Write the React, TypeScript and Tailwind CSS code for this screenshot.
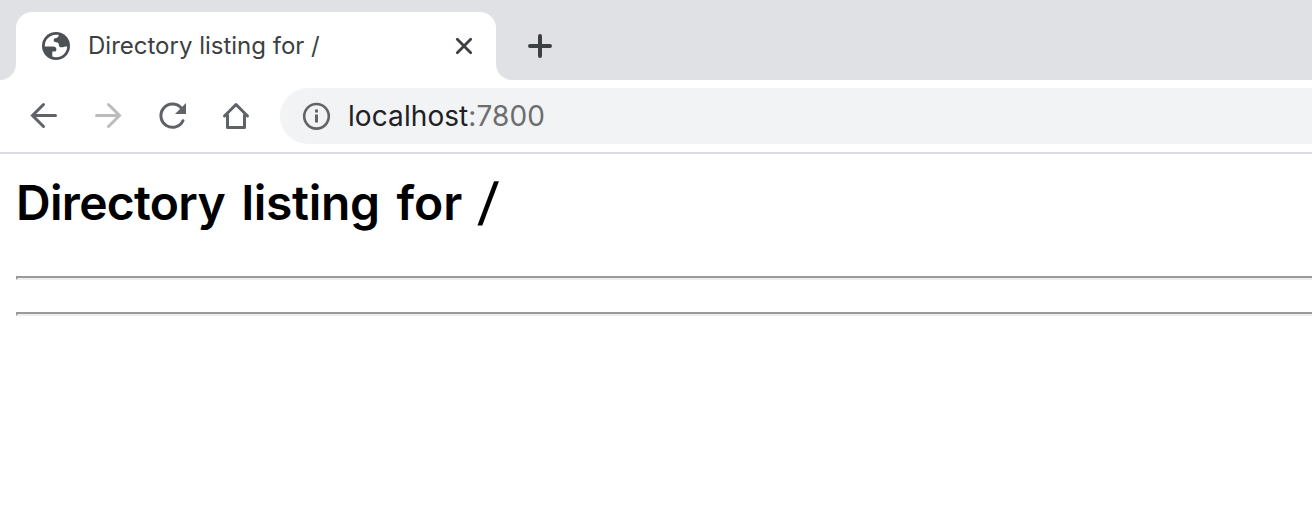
import React from "react";

function GlobeIcon() {
  return (
    <svg width="28" height="28" viewBox="0 0 28 28" className="shrink-0">
      <circle cx="14" cy="14" r="14" fill="#4d5156" />
      <path
        fill="#fff"
        d="M2.800 14.400C2.600 8 7.600 2.800 14 2.800h2.600c.2 1.800-.8 3-2.300 3.200-1.700.1-2.600.8-2.600 2.200 0 1.300.9 1.900 2.500 2 1.700.1 2.600.9 2.600 2.200 0 1.900 1 2.900 2.900 2.900 1.600 0 2.600-.9 3.300-.9h2.200C25 20.400 20.200 25.200 14 25.200c-1.300 0-2.500-.2-3.700-.6v-5h2.200c1.200 0 1.900-.8 1.900-2.200 0-1.900-1.200-3-3.200-3z"
      />
    </svg>
  );
}

function Tab() {
  return (
    <div className="w-[480px] bg-[#dfe1e5] pt-3">
      <div className="flex h-[68px] items-center rounded-t-2xl bg-white pl-[26px] pr-[23px]">
        <GlobeIcon />
        <span className="ml-[18px] whitespace-nowrap text-[24px] leading-[28px] text-[#3c4043]">
          Directory listing for /
        </span>
        <svg width="18" height="18" viewBox="0 0 18 18" className="ml-auto" stroke="#3c4043" strokeWidth="2.8" strokeLinecap="round">
          <path d="M2.300 2.300l13.400 13.400M15.700 2.300L2.300 15.700" />
        </svg>
      </div>
    </div>
  );
}

function Toolbar() {
  return (
    <div className="flex h-[74px] items-start border-b-2 border-[#dadbe0] bg-white pt-2">
      <div className="flex h-14 w-[280px] shrink-0 items-center gap-8 pl-7">
        <svg width="32" height="32" viewBox="0 0 32 32" fill="none" stroke="#5f6368" strokeWidth="3" strokeLinecap="round">
          <path d="M27.500 15.500H4.800M15.500 4.500L4.500 15.500l11 11" />
        </svg>
        <svg width="32" height="32" viewBox="0 0 32 32" fill="none" stroke="#babcbe" strokeWidth="3" strokeLinecap="round">
          <path d="M4.500 15.500h22.700M16.500 4.500l11 11-11 11" />
        </svg>
        <svg width="32" height="32" viewBox="0 0 32 32" fill="none">
          <path d="M27 20.700A11.600 11.600 0 1 1 25 7.800" stroke="#5f6368" strokeWidth="3" strokeLinecap="round" />
          <path d="M30 3v11H19z" fill="#5f6368" />
        </svg>
        <svg width="32" height="32" viewBox="0 0 32 32" fill="none" stroke="#5f6368" strokeWidth="3" strokeLinecap="round" strokeLinejoin="round">
          <path d="M4.500 16L16 4.500 27.500 16M7.500 15v12.500h17V15" />
        </svg>
      </div>
      <div className="flex h-14 flex-1 items-center rounded-l-full bg-[#f1f3f4] pl-[22px]">
        <svg width="29" height="28" viewBox="0 0 29 28" fill="none">
          <circle cx="14.500" cy="14.300" r="12.300" stroke="#636466" strokeWidth="2.600" />
          <path d="M13 12.500h3v8h-3zM13 7.500h3v3h-3z" fill="#636466" />
        </svg>
        <span className="ml-[17px] whitespace-nowrap text-[28px] leading-[32px] tracking-[0.08px] text-[#202124]">
          localhost<span className="text-[#6c6d6f]">:7800</span>
        </span>
      </div>
    </div>
  );
}

function Rule() {
  return <hr className="h-0 border-2 border-r-0 border-b-[#eeeeee] border-l-[#9a9a9a] border-t-[#9a9a9a]" />;
}

export default function App() {
  return (
    <div className="flex h-[514px] w-[1312px] flex-col overflow-hidden bg-white font-['Inter',sans-serif]">
      <div className="flex h-20 shrink-0">
        <div className="w-4 rounded-br-2xl bg-[#dfe1e5]" />
        <Tab />
        <div className="flex flex-1 items-center rounded-bl-2xl bg-[#dfe1e5] pl-8 pt-3">
          <svg width="24" height="24" viewBox="0 0 24 24" stroke="#3c4043" strokeWidth="4" strokeLinecap="round">
            <path d="M2 12h20M12 2v20" />
          </svg>
        </div>
      </div>
      <Toolbar />
      <main className="flex flex-col pl-4 pt-[21px]">
        <h1 className="h-[56px] whitespace-nowrap text-[48px] font-semibold leading-[56px] text-black [word-spacing:5px]">
          <span className="tracking-[-0.7px]">Directory </span>
          <span className="tracking-[-0.3px]">listing </span>
          <span>for </span>
          <span className="inline-block -skew-x-6 text-[51px] font-medium leading-[48px]">/</span>
        </h1>
        <div className="mt-[45px] flex flex-col gap-8">
          <Rule />
          <Rule />
        </div>
      </main>
    </div>
  );
}
